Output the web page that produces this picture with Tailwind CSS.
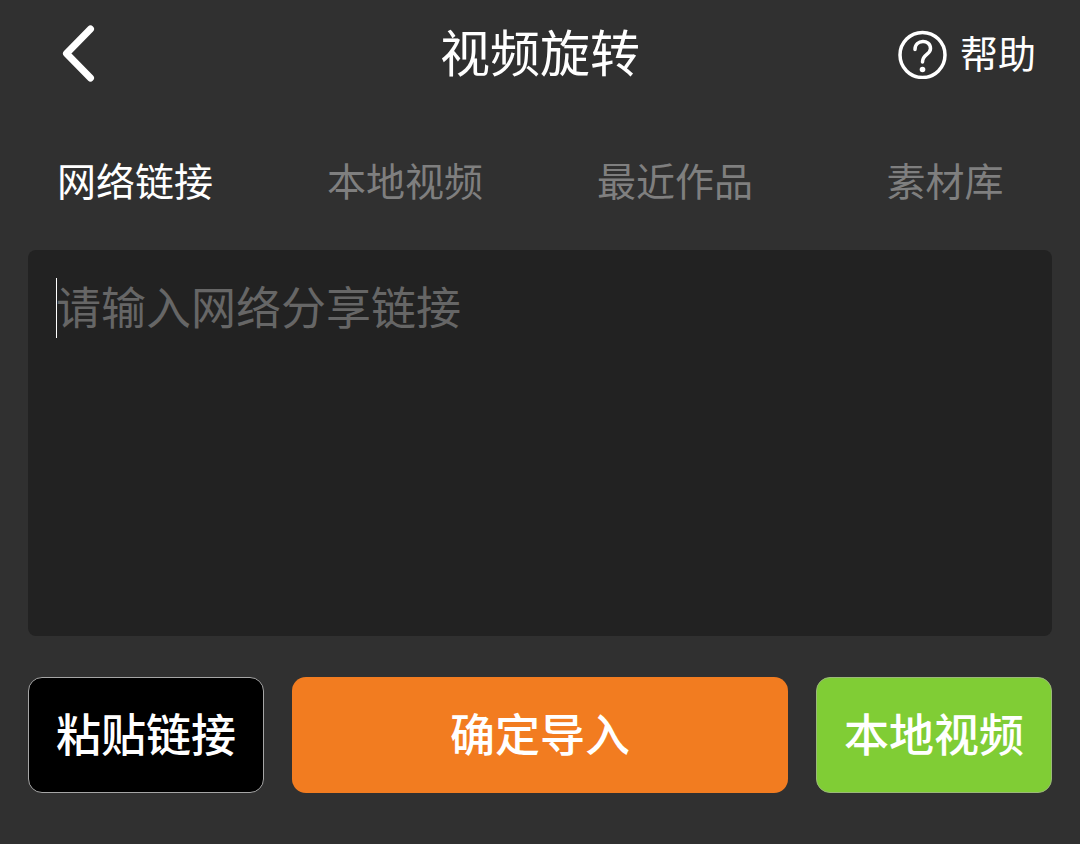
<!DOCTYPE html>
<html lang="zh-CN">
<head>
    <meta charset="UTF-8">
    <meta name="viewport" content="width=device-width, initial-scale=1.0">
    <title>视频旋转</title>
    <script src="https://cdn.jsdelivr.net/npm/@tailwindcss/browser@4"></script>
</head>
<body class="bg-[#303030] min-h-screen flex flex-col text-white font-['Noto_Sans_CJK_SC',sans-serif]">
    <!-- 顶部栏 -->
    <header class="grid grid-cols-3 items-center h-[108px] px-11">
        <button type="button" aria-label="返回" class="justify-self-start px-4">
            <svg class="w-9 h-[60px]" viewBox="0 0 36 60" fill="none" stroke="currentColor" stroke-width="7" stroke-linecap="round" stroke-linejoin="round">
                <path d="M30.500 5L6.500 29.500L30.500 54" />
            </svg>
        </button>
        <h1 class="justify-self-center pb-2 text-[50px] leading-[72px] whitespace-nowrap">视频旋转</h1>
        <button type="button" class="justify-self-end flex items-center gap-3 text-[38px] leading-[56px]">
            <svg class="w-[50px] h-[50px]" viewBox="0 0 50 50" fill="none" stroke="currentColor" stroke-width="3.500" stroke-linecap="round">
                <circle cx="24.500" cy="26" r="22.500" />
                <path d="M17 20.500C17 10 32.500 10 32.500 19.500C32.500 26 24.500 25 24.500 33" />
                <circle cx="24.500" cy="40.500" r="2.800" fill="currentColor" stroke="none" />
            </svg>
            <span class="pb-1">帮助</span>
        </button>
    </header>

    <!-- 分类标签 -->
    <nav class="grid grid-cols-4 h-[142px] items-center text-[39px] leading-[56px] text-[#7f7f7f]">
        <button type="button" class="text-white">网络链接</button>
        <button type="button">本地视频</button>
        <button type="button">最近作品</button>
        <button type="button">素材库</button>
    </nav>

    <main class="px-7">
        <!-- 链接输入框 -->
        <div class="relative">
            <textarea id="link" aria-label="网络分享链接" placeholder="请输入网络分享链接" class="block w-full h-[386px] resize-none rounded-lg bg-[#222222] px-7 py-6 text-[45px] leading-[64px] placeholder:text-[#666666] outline-none"></textarea>
            <span class="absolute left-7 top-7 w-px h-[60px] bg-white"></span>
        </div>
        <!-- 操作按钮 -->
        <div class="mt-[41px] flex gap-7 h-[116px] text-[45px] leading-[66px] font-medium">
            <button type="button" class="w-[236px] pb-1 rounded-[14px] border border-[#a6a6a6] bg-black">粘贴链接</button>
            <button type="button" class="flex-1 pb-1 rounded-[14px] bg-[#f27c20]">确定导入</button>
            <button type="button" class="w-[236px] pb-1 rounded-[14px] border border-[#9bb879] bg-[#80cd35]">本地视频</button>
        </div>
    </main>
</body>
</html>
